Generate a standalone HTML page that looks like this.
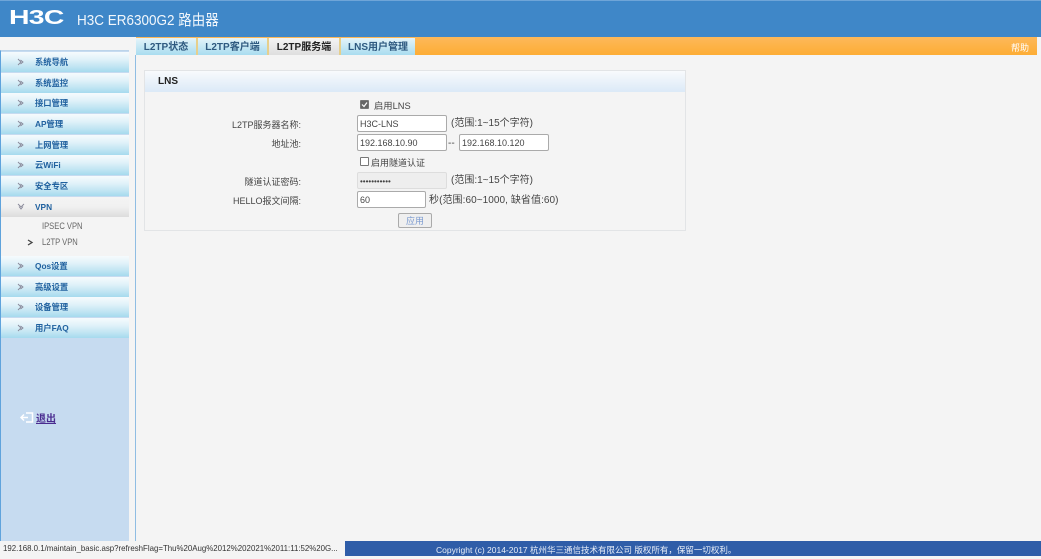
<!DOCTYPE html>
<html lang="zh"><head><meta charset="utf-8"><title>H3C ER6300G2 路由器</title>
<style>
html,body{margin:0;padding:0;background:#f4f4f4}
body{width:1041px;height:556px;position:relative;overflow:hidden;font-family:"Liberation Sans","Noto Sans CJK SC",sans-serif;font-size:10px;color:#333;filter:blur(.3px)}
.a{position:absolute;white-space:nowrap}
.hd{left:0;top:0;width:1041px;height:37px;background:#3f87c8;border-top:1px solid #6fa5d8;box-sizing:border-box}
.logo{left:9px;top:7px;font:bold 20px/23px "Liberation Sans",sans-serif;color:#fff;transform:scaleX(1.42);transform-origin:left;letter-spacing:-.5px}
.ttl{left:77px;top:10px;font-size:15px;line-height:21px;color:#f2f7fc;transform:scaleX(.9);transform-origin:left}
.side{left:0;top:50px;width:129px;height:491px;background:#c6dbf0;border-left:1px solid #5fa3dc;border-top:1px solid #bcd4ea;box-sizing:border-box}
.white{left:1px;top:197px;width:128px;height:59px;background:#f4f4f4}
.it{left:1px;width:128px;height:20px;background:linear-gradient(#f6fbfd,#e2f2f9 35%,#bfe4f2 75%,#a5daee);color:#20619f;font-size:8.300px;font-weight:bold;line-height:21px;padding-left:34px;box-sizing:border-box}
.it.vpn{background:linear-gradient(#f4f4f4,#f0f0f0 50%,#dcdcdc)}
.ar{position:absolute;left:16px;top:6px;width:8px;height:8px}
.sub{left:42px;font-size:9.500px;line-height:12px;color:#666;transform:scaleX(.8);transform-origin:left}
.ln{left:135px;top:55px;width:1px;height:486px;background:#8fbde3}
.tabbar{left:136px;top:37px;width:901px;height:18px;background:linear-gradient(#fdb85a,#fdad35)}
.tab{top:38px;height:17px;background:linear-gradient(#e5f4fa,#a9dcef);border-right:2px solid #e6cf8c;box-sizing:border-box;color:#2f5a80;font-size:10px;font-weight:bold;line-height:20px;text-align:center}
.tab.on{background:linear-gradient(#f4f4f4,#dedede);color:#222}
.help{left:1011px;top:42px;font-size:9px;line-height:12px;color:#fff}
.rt{left:1037px;top:37px;width:4px;height:504px;background:#f4f4f4}
.panel{left:144px;top:70px;width:542px;height:161px;border:1px solid #e2e4e6;box-sizing:border-box;background:#f4f4f4}
.phd{left:145px;top:71px;width:540px;height:21px;background:linear-gradient(#f8fafc,#dbe9f7);color:#222;font-size:10px;font-weight:bold;line-height:21px;padding-left:13px;box-sizing:border-box}
.lb{right:740px;font-size:9px;line-height:14px;color:#444}
.t{font-size:10px;line-height:14px;color:#444}
.in{height:17px;background:#fff;border:1px solid #aaa;border-radius:2px;box-sizing:border-box;font-size:9px;line-height:17px;padding-left:2px;color:#444}
.ck{width:9px;height:9px;box-sizing:border-box;border:1px solid #777;border-radius:1px;background:#fff}
.btn{left:398px;top:213px;width:34px;height:15px;border:1px solid #aaa;border-radius:2px;box-sizing:border-box;background:#efefef;color:#7c9bd0;font-size:9px;line-height:15px;text-align:center}
.logout{left:36px;top:413px;font-size:10px;font-weight:bold;line-height:14px;color:#4a2c90;text-decoration:underline}
.sl{left:0;top:541px;width:345px;height:15px;background:#f4f4f4;font-size:8.400px;line-height:15px;padding-left:3px;box-sizing:border-box;color:#333;overflow:hidden}
.sl span{display:inline-block;transform:scaleX(.94);transform-origin:left}
.sr{left:345px;top:541px;width:696px;height:15px;background:#2f5da8;color:#e8eef8;font-size:8.500px;line-height:18px;padding-left:91px;box-sizing:border-box}
</style></head><body>
<div class="a hd"></div>
<div class="a logo">H3C</div>
<div class="a ttl">H3C ER6300G2 路由器</div>

<div class="a side"></div>
<div class="a white"></div>
<div class="a it" style="top:52px"><svg class="ar" viewBox="0 0 8 8"><path d="M1 1l3 3-3 3M3.500 2l2.500 2-2.500 2" fill="none" stroke="#889" stroke-width=".9"/></svg>系统导航</div>
<div class="a it" style="top:72.500px"><svg class="ar" viewBox="0 0 8 8"><path d="M1 1l3 3-3 3M3.500 2l2.500 2-2.500 2" fill="none" stroke="#889" stroke-width=".9"/></svg>系统监控</div>
<div class="a it" style="top:93px"><svg class="ar" viewBox="0 0 8 8"><path d="M1 1l3 3-3 3M3.500 2l2.500 2-2.500 2" fill="none" stroke="#889" stroke-width=".9"/></svg>接口管理</div>
<div class="a it" style="top:114px"><svg class="ar" viewBox="0 0 8 8"><path d="M1 1l3 3-3 3M3.500 2l2.500 2-2.500 2" fill="none" stroke="#889" stroke-width=".9"/></svg>AP管理</div>
<div class="a it" style="top:134.500px"><svg class="ar" viewBox="0 0 8 8"><path d="M1 1l3 3-3 3M3.500 2l2.500 2-2.500 2" fill="none" stroke="#889" stroke-width=".9"/></svg>上网管理</div>
<div class="a it" style="top:155px"><svg class="ar" viewBox="0 0 8 8"><path d="M1 1l3 3-3 3M3.500 2l2.500 2-2.500 2" fill="none" stroke="#889" stroke-width=".9"/></svg>云WiFi</div>
<div class="a it" style="top:175.500px"><svg class="ar" viewBox="0 0 8 8"><path d="M1 1l3 3-3 3M3.500 2l2.500 2-2.500 2" fill="none" stroke="#889" stroke-width=".9"/></svg>安全专区</div>
<div class="a it vpn" style="top:197px"><svg class="ar" viewBox="0 0 8 8"><path d="M1 1l3 3 3-3M2 3.500l2 2.500 2-2.500" fill="none" stroke="#889" stroke-width=".9"/></svg>VPN</div>
<div class="a sub" style="top:221px">IPSEC VPN</div>
<svg class="a" style="left:27px;top:239px" width="7" height="7" viewBox="0 0 7 7"><path d="M1 1l4 2.500-4 2.500" fill="none" stroke="#444" stroke-width="1.300"/></svg>
<div class="a sub" style="top:237px">L2TP VPN</div>
<div class="a it" style="top:256px"><svg class="ar" viewBox="0 0 8 8"><path d="M1 1l3 3-3 3M3.500 2l2.500 2-2.500 2" fill="none" stroke="#889" stroke-width=".9"/></svg>Qos设置</div>
<div class="a it" style="top:276.500px"><svg class="ar" viewBox="0 0 8 8"><path d="M1 1l3 3-3 3M3.500 2l2.500 2-2.500 2" fill="none" stroke="#889" stroke-width=".9"/></svg>高级设置</div>
<div class="a it" style="top:297px"><svg class="ar" viewBox="0 0 8 8"><path d="M1 1l3 3-3 3M3.500 2l2.500 2-2.500 2" fill="none" stroke="#889" stroke-width=".9"/></svg>设备管理</div>
<div class="a it" style="top:318px"><svg class="ar" viewBox="0 0 8 8"><path d="M1 1l3 3-3 3M3.500 2l2.500 2-2.500 2" fill="none" stroke="#889" stroke-width=".9"/></svg>用户FAQ</div>
<svg class="a" style="left:20px;top:411px" width="14" height="13" viewBox="0 0 14 13"><path d="M6 2h6.500v9H6M1 6.500h7M4 3.500l-3 3 3 3" fill="none" stroke="#fff" stroke-width="1.500"/></svg>
<div class="a logout">退出</div>

<div class="a ln"></div>
<div class="a tabbar"></div>
<div class="a tab" style="left:136px;width:62px">L2TP状态</div>
<div class="a tab" style="left:198px;width:71px">L2TP客户端</div>
<div class="a tab on" style="left:269px;width:72px">L2TP服务端</div>
<div class="a tab" style="left:341px;width:74px;border-right:0">LNS用户管理</div>
<div class="a help">帮助</div>
<div class="a rt"></div>

<div class="a panel"></div>
<div class="a phd">LNS</div>

<div class="a ck" style="left:360px;top:100px;background:#666"><svg style="display:block" width="7" height="7" viewBox="0 0 7 7"><path d="M1 3.500l2 2 3-4" fill="none" stroke="#fff" stroke-width="1.200"/></svg></div>
<div class="a t" style="left:374px;top:99px;font-size:9.300px">启用LNS</div>

<div class="a lb" style="top:118px">L2TP服务器名称:</div>
<div class="a in" style="left:357px;top:115px;width:90px">H3C-LNS</div>
<div class="a t" style="left:451px;top:117px">(范围:1~15个字符)</div>

<div class="a lb" style="top:137px">地址池:</div>
<div class="a in" style="left:357px;top:134px;width:90px">192.168.10.90</div>
<div class="a t" style="left:448px;top:137px">--</div>
<div class="a in" style="left:459px;top:134px;width:90px">192.168.10.120</div>

<div class="a ck" style="left:360px;top:157px"></div>
<div class="a t" style="left:371px;top:156px;font-size:9px">启用隧道认证</div>

<div class="a lb" style="top:175px">隧道认证密码:</div>
<div class="a in" style="left:357px;top:172px;width:90px;background:#eeeeee;border-color:#ddd;font-size:8px">•••••••••••</div>
<div class="a t" style="left:451px;top:174px">(范围:1~15个字符)</div>

<div class="a lb" style="top:194px">HELLO报文间隔:</div>
<div class="a in" style="left:357px;top:191px;width:69px">60</div>
<div class="a t" style="left:429px;top:194px;letter-spacing:.07px">秒(范围:60~1000, 缺省值:60)</div>

<div class="a btn">应用</div>

<div class="a sl"><span>192.168.0.1/maintain_basic.asp?refreshFlag=Thu%20Aug%2012%202021%2011:11:52%20G...</span></div>
<div class="a sr">Copyright (c) 2014-2017 杭州华三通信技术有限公司 版权所有，保留一切权利。</div>
</body></html>
